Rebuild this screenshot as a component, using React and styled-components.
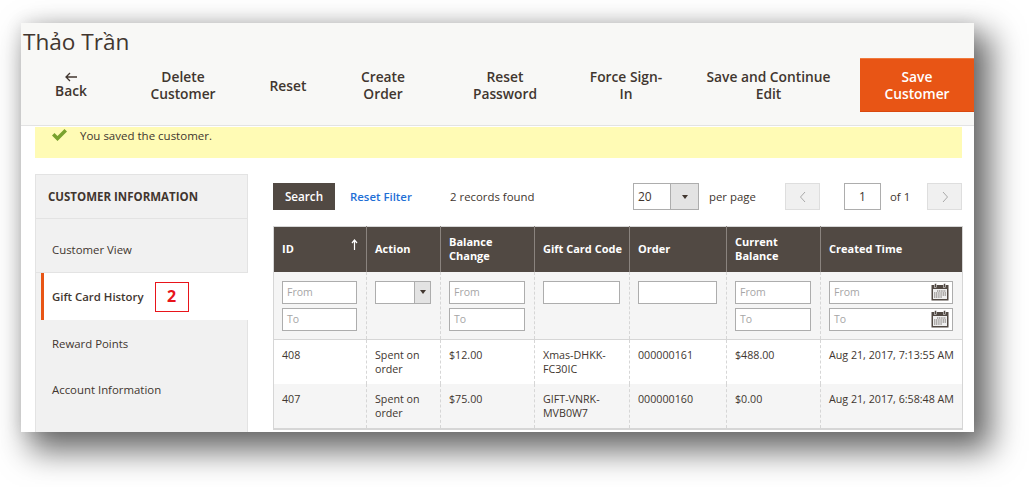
import React from "react";
import styled, { createGlobalStyle } from "styled-components";

const GlobalStyle = createGlobalStyle`
  html, body {
    margin: 0;
    padding: 0;
    background: #fff;
  }
  body {
    font-family: "Open Sans", "Noto Sans", sans-serif;
    color: #41362f;
  }
  * {
    box-sizing: border-box;
  }
`;

const Page = styled.div`
  width: 1029px;
  height: 487px;
  padding: 23px 55px 55px 21px;
  overflow: hidden;
`;

const Shot = styled.div`
  width: 953px;
  height: 409px;
  background: #fff;
  overflow: hidden;
  box-shadow: 13px 15px 30px 4px rgba(0, 0, 0, 0.58), 0 0 16px rgba(0, 0, 0, 0.1);
`;

const PageHead = styled.header`
  height: 103px;
  background: #f8f8f6;
  border-bottom: 1px solid #e3e3e3;
`;

const Title = styled.h1`
  margin: 0;
  padding: 3px 0 0 2px;
  height: 35px;
  font-size: 22.6px;
  line-height: 32px;
  font-weight: 400;
  color: #41362f;
`;

const Actions = styled.div`
  display: flex;
  height: 54px;
`;

const ActionButton = styled.div`
  width: ${props => props.$width}px;
  display: flex;
  flex-direction: column;
  align-items: center;
  justify-content: center;
  text-align: center;
  font-size: 13.8px;
  line-height: 17px;
  font-weight: 600;
  color: #41362f;
  padding: 0 ${props => props.$pad || 0}px;
`;

const SaveButton = styled(ActionButton)`
  background: #e85515;
  border-top: 1px solid #f07a3c;
  border-bottom: 1px solid #d9490f;
  color: #fff;
`;

const Message = styled.div`
  display: flex;
  align-items: flex-start;
  height: 31px;
  margin: 1px 12px 0 14px;
  padding: 0 0 0 16px;
  background: #fffbb5;
  font-size: 11.5px;
  line-height: 17px;
  color: #41362f;
`;

const CheckIcon = styled.svg`
  width: 17px;
  height: 14px;
  margin: 1px 12px 0 0;
`;

const Body = styled.div`
  display: flex;
  padding: 16px 0 0 14px;
`;

const Sidebar = styled.nav`
  width: 213px;
  height: 300px;
  background: #f1f1f1;
  border: 1px solid #e3e3e3;
  border-bottom: 0;
`;

const SideTitle = styled.div`
  height: 44px;
  padding-left: 12px;
  border-bottom: 1px solid #e3e3e3;
  font-size: 11.5px;
  line-height: 43px;
  font-weight: 700;
  color: #41362f;
`;

const SideItem = styled.div`
  display: flex;
  align-items: center;
  height: ${props => props.$height}px;
  padding-left: 16px;
  padding-top: ${props => props.$top || 0}px;
  padding-bottom: ${props => props.$bottom || 0}px;
  font-size: 11.4px;
  color: #41362f;
  border-bottom: ${props => (props.$line ? "1px solid #e3e3e3" : "0")};
`;

const ActiveItem = styled.div`
  display: flex;
  align-items: center;
  height: 47px;
  margin: 0 -1px 0 5px;
  padding-left: 8px;
  background: #fff;
  border-left: 3px solid #e85515;
  font-size: 11.4px;
  font-weight: 600;
  color: #41362f;
`;

const StepBadge = styled.span`
  width: 34px;
  height: 30px;
  margin-left: 11px;
  border: 1.5px solid #e8141a;
  color: #e8141a;
  font-size: 16px;
  font-weight: 700;
  line-height: 27px;
  text-align: center;
`;

const Main = styled.main`
  width: 690px;
  margin-left: 25px;
`;

const GridBar = styled.div`
  display: flex;
  align-items: center;
  height: 27px;
  margin: 9px 0 16px;
  font-size: 11.4px;
`;

const SearchButton = styled.div`
  width: 62px;
  height: 27px;
  background: #514943;
  color: #fff;
  font-size: 11.7px;
  font-weight: 600;
  line-height: 27px;
  text-align: center;
`;

const ResetLink = styled.span`
  margin-left: 15px;
  width: 100px;
  color: #1f6fd6;
  font-weight: 600;
`;

const BarText = styled.span`
  margin-left: ${props => props.$left}px;
  width: ${props => props.$width}px;
  white-space: nowrap;
`;

const PerPage = styled.div`
  display: flex;
  width: 66px;
  height: 27px;
  background: #fff;
  border: 1px solid #adadad;
  font-size: 12px;
  line-height: 25px;
`;

const PerPageValue = styled.span`
  flex: 1;
  padding-left: 4px;
`;

const ArrowBox = styled.span`
  display: flex;
  align-items: center;
  justify-content: center;
  width: ${props => props.$width}px;
  background: #e3e3e3;
  border-left: 1px solid #adadad;
`;

const Caret = styled.i`
  width: 0;
  height: 0;
  border-left: 3.5px solid transparent;
  border-right: 3.5px solid transparent;
  border-top: 4px solid #41362f;
`;

const PageButton = styled.div`
  display: flex;
  align-items: center;
  justify-content: center;
  width: 35px;
  height: 27px;
  background: #f0f0f0;
  border: 1px solid #dedede;
`;

const PageInput = styled.div`
  width: 37px;
  height: 27px;
  margin-left: 24px;
  background: #fff;
  border: 1px solid #adadad;
  line-height: 25px;
  text-align: center;
  font-size: 12px;
`;

const Grid = styled.table`
  width: 689px;
  table-layout: fixed;
  border-collapse: collapse;
  border: 1px solid #d6d6d6;
  border-bottom-width: 2px;
  font-size: 10.7px;
  line-height: 14px;
`;

const Head = styled.th`
  height: 45px;
  padding: 0 3px 0 8px;
  position: relative;
  background: #514943;
  border-left: 1px solid #8a837e;
  color: #fff;
  font-size: 11px;
  line-height: 14px;
  font-weight: 700;
  text-align: left;
  &:first-child {
    border-left: 0;
  }
`;

const SortArrow = styled.svg`
  position: absolute;
  top: 12px;
  right: 8px;
  width: 7px;
  height: 11px;
`;

const FilterCell = styled.td`
  height: 68px;
  padding: 9px 9px 0 8px;
  vertical-align: top;
  background: #f5f5f5;
  border-left: 1px dashed #d6d6d6;
  border-bottom: 1px solid #d6d6d6;
  &:first-child {
    border-left: 0;
  }
`;

const FieldWrap = styled.div`
  display: flex;
  align-items: center;
  height: 23px;
  margin-bottom: 4px;
  padding: 0 3px 0 4px;
  background: #fff;
  border: 1px solid #adadad;
`;

const FieldText = styled.span`
  flex: 1;
  color: #a6a6a6;
  font-size: 10.5px;
`;

const CalendarIcon = styled.svg`
  width: 18px;
  height: 18px;
`;

const ActionSelect = styled.div`
  display: flex;
  width: 56px;
  height: 23px;
  background: #fff;
  border: 1px solid #adadad;
`;

const Cell = styled.td`
  height: 44.5px;
  padding: 8px 8px 0 8px;
  vertical-align: top;
  background: ${props => (props.$alt ? "#f5f5f5" : "#fff")};
  border-left: 1px dashed #d6d6d6;
  color: #41362f;
  &:first-child {
    border-left: 0;
  }
`;

const columns = [93, 74, 94, 95, 97, 94, 142];

const rows = [
  ["408", "Spent on order", "$12.00", "Xmas-DHKK-FC30IC", "000000161", "$488.00", "Aug 21, 2017, 7:13:55 AM"],
  ["407", "Spent on order", "$75.00", "GIFT-VNRK-MVB0W7", "000000160", "$0.00", "Aug 21, 2017, 6:58:48 AM"],
];

const Calendar = () => (
  <CalendarIcon viewBox="0 0 18 18">
    <rect x="0.5" y="2" width="17" height="15.5" fill="#514943" />
    <rect x="2" y="6" width="14" height="10" fill="#efefef" />
    <rect x="3.5" y="0.5" width="2" height="4" fill="#514943" stroke="#fff" strokeWidth="0.5" />
    <rect x="12.5" y="0.5" width="2" height="4" fill="#514943" stroke="#fff" strokeWidth="0.5" />
    <path d="M6 8h9M3 10h12M3 12h12M3 14h8" stroke="#6f6964" strokeWidth="1.2" strokeDasharray="1.2 0.6" />
  </CalendarIcon>
);

const Chevron = ({ d }) => (
  <svg width="8" height="12" viewBox="0 0 8 12" fill="none">
    <path d={d} stroke="#a9a9a9" strokeWidth="1" />
  </svg>
);

const Field = ({ label, calendar }) => (
  <FieldWrap>
    <FieldText>{label}</FieldText>
    {calendar && <Calendar />}
  </FieldWrap>
);

const RangeFilter = ({ calendar }) => (
  <FilterCell>
    <Field label="From" calendar={calendar} />
    <Field label="To" calendar={calendar} />
  </FilterCell>
);

export default function App() {
  return (
    <Page>
      <GlobalStyle />
      <Shot>
        <PageHead>
          <Title>Thảo Trần</Title>
          <Actions>
            <ActionButton $width={100}>
              <svg width="14" height="10" viewBox="0 0 14 10" fill="none">
                <path d="M13 5H2M6 1L2 5l4 4" stroke="#41362f" strokeWidth="1.3" />
              </svg>
              Back
            </ActionButton>
            <ActionButton $width={124} $pad={20}>Delete Customer</ActionButton>
            <ActionButton $width={86}>Reset</ActionButton>
            <ActionButton $width={104} $pad={20}>Create Order</ActionButton>
            <ActionButton $width={140} $pad={30}>Reset Password</ActionButton>
            <ActionButton $width={102} $pad={12}>Force Sign-In</ActionButton>
            <ActionButton $width={183} $pad={20}>Save and Continue Edit</ActionButton>
            <SaveButton $width={114} $pad={20}>Save Customer</SaveButton>
          </Actions>
        </PageHead>

        <Message>
          <CheckIcon viewBox="0 0 17 14">
            <path d="M1 7.5l2.5-2.5 3 3L13.5 1 16 3.5 6.5 13z" fill="#79a22e" />
          </CheckIcon>
          You saved the customer.
        </Message>

        <Body>
          <Sidebar>
            <SideTitle>CUSTOMER INFORMATION</SideTitle>
            <SideItem $height={54} $top={8} $line>Customer View</SideItem>
            <ActiveItem>
              Gift Card History
              <StepBadge>2</StepBadge>
            </ActiveItem>
            <SideItem $height={47} $bottom={1}>Reward Points</SideItem>
            <SideItem $height={47} $bottom={2}>Account Information</SideItem>
          </Sidebar>

          <Main>
            <GridBar>
              <SearchButton>Search</SearchButton>
              <ResetLink>Reset Filter</ResetLink>
              <BarText $left={0} $width={183}>2 records found</BarText>
              <PerPage>
                <PerPageValue>20</PerPageValue>
                <ArrowBox $width={28}><Caret /></ArrowBox>
              </PerPage>
              <BarText $left={10} $width={76}>per page</BarText>
              <PageButton>
                <Chevron d="M6 1L1.5 6 6 11" />
              </PageButton>
              <PageInput>1</PageInput>
              <BarText $left={9} $width={37}>of 1</BarText>
              <PageButton>
                <Chevron d="M2 1l4.5 5L2 11" />
              </PageButton>
            </GridBar>

            <Grid>
              <colgroup>
                {columns.map((width, i) => (
                  <col key={i} width={width} />
                ))}
              </colgroup>
              <thead>
                <tr>
                  <Head>
                    ID
                    <SortArrow viewBox="0 0 7 11" fill="none">
                      <path d="M3.5 11V1.5M1 4l2.5-3L6 4" stroke="#fff" strokeWidth="1.2" />
                    </SortArrow>
                  </Head>
                  <Head>Action</Head>
                  <Head>Balance Change</Head>
                  <Head>Gift Card Code</Head>
                  <Head>Order</Head>
                  <Head>Current Balance</Head>
                  <Head>Created Time</Head>
                </tr>
              </thead>
              <tbody>
                <tr>
                  <RangeFilter />
                  <FilterCell>
                    <ActionSelect>
                      <PerPageValue />
                      <ArrowBox $width={16}><Caret /></ArrowBox>
                    </ActionSelect>
                  </FilterCell>
                  <RangeFilter />
                  <FilterCell><FieldWrap /></FilterCell>
                  <FilterCell><FieldWrap /></FilterCell>
                  <RangeFilter />
                  <RangeFilter calendar />
                </tr>
                {rows.map((row, r) => (
                  <tr key={row[0]}>
                    {row.map((value, c) => (
                      <Cell key={c} $alt={r === 1}>{value}</Cell>
                    ))}
                  </tr>
                ))}
              </tbody>
            </Grid>
          </Main>
        </Body>
      </Shot>
    </Page>
  );
}
